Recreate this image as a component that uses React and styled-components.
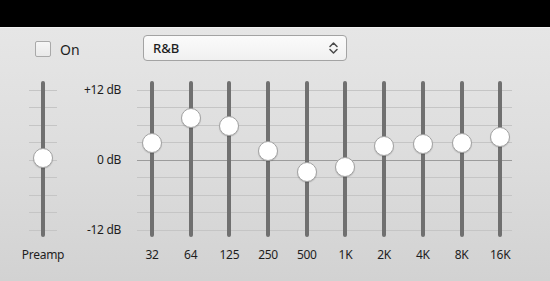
import React from 'react';
import styled, {createGlobalStyle} from 'styled-components';

const GlobalStyle = createGlobalStyle`
    html, body { margin: 0; padding: 0; background: #000; }
    body { width: 550px; height: 281px; overflow: hidden; font-family: "Noto Sans", "Open Sans", sans-serif; }
`;

const TopBar = styled.div`height: 27px; background: #000;`;

const Panel = styled.div`
    height: 254px;
    border-top: 1px solid #f2f2f2;
    box-sizing: border-box;
    background: linear-gradient(to bottom, #e6e6e6 0%, #dcdcdc 55%, #d2d2d2 100%);
    color: #1e1e1e;
`;

const Toolbar = styled.div`
    display: flex;
    align-items: center;
    padding: 7px 0 0 35px;
    height: 26px;
`;

const Check = styled.label`
    display: flex;
    align-items: center;
    gap: 9px;
    width: 108px;
    padding-top: 2px;
    font-size: 14px;
`;

const Box = styled.span`
    width: 14px;
    height: 14px;
    border: 1px solid #a9a9a9;
    border-radius: 2px;
    background: linear-gradient(#f6f6f6, #e9e9e9);
`;

const Select = styled.div`
    width: 204px;
    height: 26px;
    box-sizing: border-box;
    border: 1px solid #a3a3a3;
    border-radius: 4px;
    background: linear-gradient(#fbfbfb, #f0f0f0);
    display: flex;
    align-items: center;
    justify-content: space-between;
    padding: 0 8px 0 9px;
    font-size: 13px;
    font-weight: 500;
`;

const EqRow = styled.div`
    display: flex;
    margin-top: 20px;
`;

const Column = styled.div`
    display: flex;
    flex-direction: column;
    align-items: center;
    width: ${p => p.w}px;
    flex: none;
`;

const Slider = styled.div`
    position: relative;
    width: 100%;
    height: 156px;
    background-image: ${p => p.grid
        ? 'repeating-linear-gradient(to bottom, #c5c5c5 0 1px, transparent 1px 17.5px)'
        : 'none'};
    background-size: 100% 141px;
    background-position: 0 9px;
    background-repeat: no-repeat;
`;

const Track = styled.div`
    width: 4px;
    height: 156px;
    margin: 0 auto;
    border-radius: 2px;
    background: #707070;
`;

const Knob = styled.div`
    position: absolute;
    left: 50%;
    width: 18px;
    height: 18px;
    margin: -10px 0 0 -10px;
    border-radius: 50%;
    background: #fff;
    border: 1px solid #a2a2a2;
    box-shadow: 0 1px 1px rgba(0,0,0,0.15);
`;

const Label = styled.div`
    margin-top: 10px;
    font-size: 12px;
    letter-spacing: -0.3px;
    line-height: 16px;
    white-space: nowrap;
`;

const Scale = styled.div`
    width: 64px;
    height: 154px;
    padding-top: 2px;
    display: flex;
    flex-direction: column;
    justify-content: space-between;
    align-items: flex-end;
    font-size: 12px;
    letter-spacing: -0.3px;
    line-height: 14px;
`;

const Bands = styled.div`
    display: flex;
    gap: 8.7px;
    margin-left: 16px;
    align-self: flex-start;
    background-image:
        linear-gradient(#9c9c9c, #9c9c9c),
        repeating-linear-gradient(to bottom, #c5c5c5 0 1px, transparent 1px 17.5px);
    background-size: 375px 1px, 375px 141px;
    background-position: 0 79px, 0 9px;
    background-repeat: no-repeat;
`;

const bands = [
    ['32', 2.9], ['64', 7.2], ['125', 5.8], ['250', 1.5], ['500', -2.1],
    ['1K', -1.2], ['2K', 2.4], ['4K', 2.7], ['8K', 2.9], ['16K', 3.9],
];

const toY = db => 79 - db * 70 / 12;

function Fader({label, db, w, grid}) {
    return (
        <Column w={w} style={grid ? {marginLeft: 29} : undefined}>
            <Slider grid={grid}>
                <Track/>
                <Knob style={{top: toY(db)}}/>
            </Slider>
            <Label>{label}</Label>
        </Column>
    );
}

function Chevrons() {
    return (
        <svg width="9" height="12" viewBox="0 0 9 12" fill="none" stroke="#4a4a4a" strokeWidth="1.5" strokeLinecap="round" strokeLinejoin="round">
            <path d="M1 4.5 L4.5 1 L8 4.5"/>
            <path d="M1 7.5 L4.5 11 L8 7.5"/>
        </svg>
    );
}

export default function App() {
    return (
        <>
            <GlobalStyle/>
            <TopBar/>
            <Panel>
                <Toolbar>
                    <Check><Box/>On</Check>
                    <Select>R&amp;B<Chevrons/></Select>
                </Toolbar>
                <EqRow>
                    <Fader label="Preamp" db={0.3} w={28} grid/>
                    <Scale>
                        <span>+12 dB</span>
                        <span>0 dB</span>
                        <span>-12 dB</span>
                    </Scale>
                    <Bands>
                        {bands.map(([l, db]) => <Fader key={l} label={l} db={db} w={30}/>)}
                    </Bands>
                </EqRow>
            </Panel>
        </>
    );
}
